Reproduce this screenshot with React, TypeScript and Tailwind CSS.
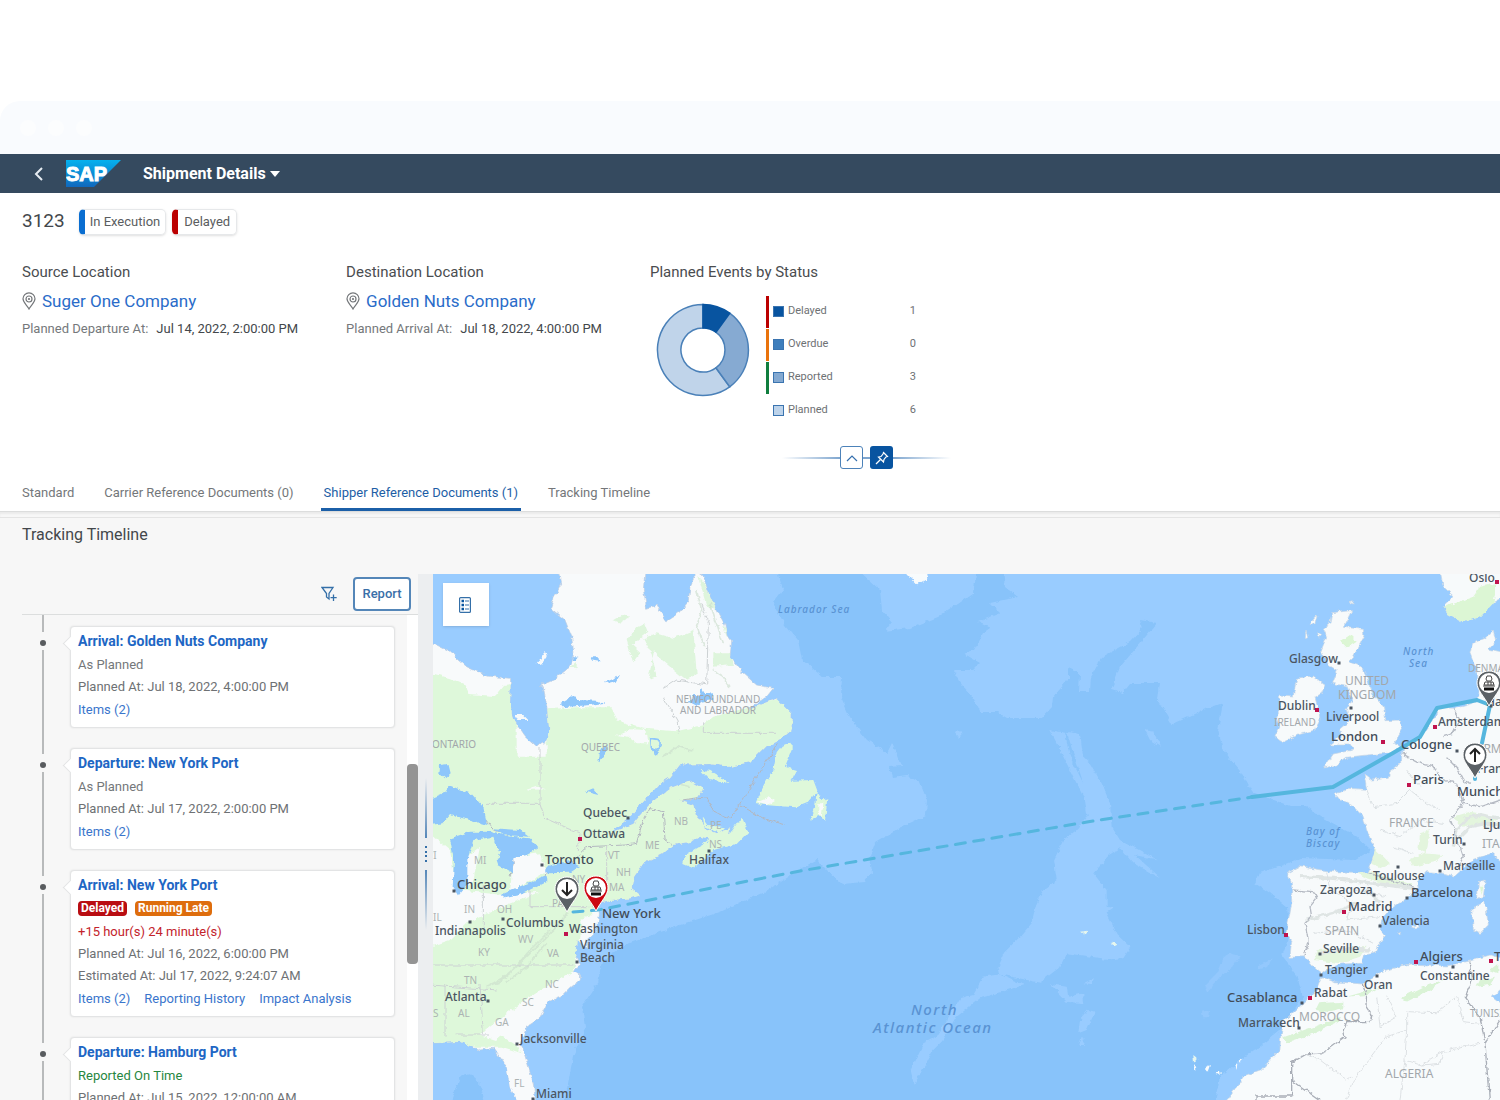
import React, { useState } from 'react';
import clsx from 'clsx';

type LabelKind = 'major' | 'city' | 'region' | 'country' | 'state' | 'sea' | 'ocean';
type MapLabel = [text: string, x: number, y: number, kind: LabelKind];

const labelStyles: Record<LabelKind, string> = {
  major: 'fill-[#424c58] text-[13px] font-medium',
  city: 'fill-[#4b5561] text-[12px] font-medium',
  region: 'fill-[#a2a7ab] text-[10px]',
  country: 'fill-[#a2a7ab] text-[12px]',
  state: 'fill-[#acb3b3] text-[10px]',
  sea: 'fill-[#5a93d3] text-[10px] italic font-medium tracking-widest',
  ocean: 'fill-[#5a93d3] text-[15px] italic font-medium tracking-widest',
};

// [text, x, baseline, kind]
const mapLabels: MapLabel[] = [
  ['Labrador Sea', 778, 613, 'sea'],
  ['North', 1403, 655, 'sea'],
  ['Sea', 1409, 667, 'sea'],
  ['Bay of', 1306, 835, 'sea'],
  ['Biscay', 1306, 847, 'sea'],
  ['North', 911, 1015, 'ocean'],
  ['Atlantic Ocean', 873, 1033, 'ocean'],
  ['NEWFOUNDLAND', 676, 703, 'region'],
  ['AND LABRADOR', 680, 714, 'region'],
  ['ONTARIO', 432, 748, 'region'],
  ['QUEBEC', 581, 751, 'region'],
  ['UNITED', 1345, 685, 'country'],
  ['KINGDOM', 1338, 699, 'country'],
  ['IRELAND', 1274, 726, 'region'],
  ['DENMARK', 1468, 672, 'region'],
  ['GERMANY', 1468, 753, 'country'],
  ['FRANCE', 1389, 827, 'country'],
  ['ITALY', 1482, 848, 'country'],
  ['SPAIN', 1325, 935, 'country'],
  ['MOROCCO', 1299, 1021, 'country'],
  ['TUNISIA', 1470, 1017, 'region'],
  ['ALGERIA', 1385, 1078, 'country'],
  ['NB', 674, 825, 'state'],
  ['PE', 710, 829, 'state'],
  ['NS', 709, 848, 'state'],
  ['ME', 645, 849, 'state'],
  ['VT', 608, 859, 'state'],
  ['NH', 616, 876, 'state'],
  ['MA', 609, 891, 'state'],
  ['NY', 572, 883, 'state'],
  ['PA', 552, 907, 'state'],
  ['MI', 474, 864, 'state'],
  ['WI', 424, 859, 'state'],
  ['IL', 433, 921, 'state'],
  ['IN', 464, 913, 'state'],
  ['OH', 497, 913, 'state'],
  ['WV', 518, 943, 'state'],
  ['KY', 478, 956, 'state'],
  ['VA', 547, 957, 'state'],
  ['TN', 464, 984, 'state'],
  ['NC', 545, 988, 'state'],
  ['SC', 522, 1006, 'state'],
  ['MS', 424, 1017, 'state'],
  ['AL', 458, 1017, 'state'],
  ['GA', 495, 1026, 'state'],
  ['FL', 514, 1087, 'state'],
  ['Quebec', 583, 817, 'city'],
  ['Ottawa', 583, 838, 'city'],
  ['Halifax', 689, 864, 'city'],
  ['Toronto', 545, 864, 'major'],
  ['Chicago', 457, 889, 'major'],
  ['New York', 602, 918, 'major'],
  ['Columbus', 506, 927, 'city'],
  ['Indianapolis', 435, 935, 'city'],
  ['Washington', 569, 933, 'city'],
  ['Virginia', 580, 949, 'city'],
  ['Beach', 580, 962, 'city'],
  ['Atlanta', 445, 1001, 'city'],
  ['Jacksonville', 520, 1043, 'city'],
  ['Miami', 536, 1098, 'city'],
  ['Oslo', 1469, 582, 'city'],
  ['Glasgow', 1289, 663, 'city'],
  ['Dublin', 1278, 710, 'city'],
  ['Liverpool', 1326, 721, 'city'],
  ['London', 1331, 741, 'major'],
  ['Amsterdam', 1438, 726, 'city'],
  ['Cologne', 1401, 749, 'major'],
  ['Hamburg', 1486, 706, 'city'],
  ['Frankfurt', 1477, 773, 'city'],
  ['Paris', 1413, 784, 'major'],
  ['Munich', 1457, 796, 'major'],
  ['Ljubljana', 1483, 829, 'city'],
  ['Turin', 1433, 844, 'city'],
  ['Marseille', 1443, 870, 'city'],
  ['Toulouse', 1373, 880, 'city'],
  ['Zaragoza', 1320, 894, 'city'],
  ['Barcelona', 1411, 897, 'major'],
  ['Madrid', 1348, 911, 'major'],
  ['Valencia', 1382, 925, 'city'],
  ['Lisbon', 1247, 934, 'city'],
  ['Seville', 1323, 953, 'city'],
  ['Tangier', 1325, 974, 'city'],
  ['Algiers', 1420, 961, 'major'],
  ['Constantine', 1420, 980, 'city'],
  ['Oran', 1364, 989, 'city'],
  ['Rabat', 1314, 997, 'city'],
  ['Casablanca', 1227, 1002, 'major'],
  ['Marrakech', 1238, 1027, 'city'],
  ['Tunis', 1494, 961, 'major'],
];

const cityDots: [number, number][] = [
  [628, 818], [709, 851], [542, 865], [454, 891], [470, 922], [503, 919],
  [577, 962], [488, 1001], [517, 1044], [533, 1099], [1339, 663], [1351, 708],
  [1457, 751], [1464, 844], [1440, 871], [1398, 867], [1374, 895], [1407, 898],
  [1380, 926], [1320, 954], [1321, 975], [1377, 976], [1453, 967], [1302, 1003],
  [1299, 1028], [1491, 706],
];

const capitalDots: [number, number][] = [
  [580, 839], [566, 934], [1497, 582], [1317, 710], [1383, 742], [1435, 727],
  [1409, 785], [1344, 912], [1286, 935], [1310, 998], [1416, 962], [1491, 961],
];

// All land masses west of the Atlantic, three units per map unit
const northAmerica =
  'M10,220 60,245 110,290 170,318 242,325 240,400 248,445 285,500 318,530 335,515 345,522 358,480 352,420 340,350 330,348 370,330 415,295 432,250 425,200 405,150 362,115 372,85 395,40 388,5 645,5 640,60 650,115 680,106 710,152 745,130 775,95 780,50 800,5 820,20 835,65 850,100 885,165 890,195 905,215 900,260 940,310 980,345 1030,355 1010,380 950,420 1040,385 1085,430 1085,480 1050,510 1000,535 960,575 900,590 840,582 750,583 720,622 690,640 640,695 600,740 540,790 610,762 655,705 720,655 780,632 820,655 800,685 750,692 790,705 797,735 825,775 860,790 900,775 895,800 840,805 810,800 780,815 730,825 700,850 640,880 612,920 605,955 630,975 600,985 540,990 500,1000 508,1030 500,1080 470,1110 474,1135 440,1110 436,1150 450,1180 432,1206 452,1215 450,1232 425,1250 395,1280 355,1295 330,1345 290,1370 273,1420 292,1480 310,1540 316,1590 322,1640 285,1640 240,1550 230,1490 190,1435 150,1440 90,1415 0,1420 0,220Z';

const northGreen =
  'M0,308 60,325 108,345 115,372 195,378 222,345 260,340 260,560 350,560 350,418 440,412 545,412 565,452 640,476 740,484 820,465 850,440 960,412 1100,370 1100,620 830,900 650,990 500,1010 460,1060 445,1130 430,1210 350,1260 270,1330 200,1390 250,1420 275,1450 215,1430 0,1430Z';

const europe =
  'M465,672 500,655 560,658 552,612 575,630 625,625 630,605 665,580 665,545 720,500 765,440 775,415 820,418 880,400 895,385 900,340 885,290 870,250 878,220 915,205 940,180 947,215 925,240 970,250 970,880 935,850 880,868 825,918 780,908 740,905 712,935 715,955 680,985 635,1015 605,1050 600,1075 616,1100 590,1130 587,1148 555,1155 545,1180 480,1182 440,1200 425,1212 400,1190 375,1160 330,1162 335,1115 318,1090 335,1000 335,940 322,910 360,890 460,905 565,908 585,840 560,780 550,740 520,710 480,690Z';

const britain =
  'M455,128 515,122 490,172 550,178 552,200 520,260 505,275 545,290 560,320 575,370 610,410 618,452 660,450 668,475 640,520 668,532 640,548 560,555 500,562 470,585 432,594 460,552 520,540 510,525 450,525 485,495 478,478 512,450 500,410 520,395 500,350 455,340 470,300 445,285 422,245 440,200 430,175 450,160Z';

const africa =
  'M425,440 460,455 550,462 600,425 690,402 800,408 870,393 930,375 970,385 970,470 938,500 970,525 970,830 130,830 190,740 240,722 300,660 302,620 312,572 370,520 410,480Z';

// Deep water of the Atlantic basin, in map units
const deepOcean =
  'M777,570 783,590 773,603 785,625 798,640 802,660 823,677 842,677 841,697 850,717 867,740 887,753 892,743 901,766 889,767 892,777 907,775 920,783 927,800 926,816 900,828 875,843 870,857 872,872 865,882 842,884 827,870 817,860 798,870 763,893 720,912 680,925 630,943 603,960 597,983 582,1007 585,1028 573,1057 563,1110 1213,1110 1220,1077 1240,1060 1262,1045 1280,1030 1303,997 1297,975 1282,955 1290,935 1287,907 1270,893 1255,883 1260,873 1283,865 1300,858 1355,860 1371,850 1355,835 1323,818 1306,806 1290,806 1252,792 1240,770 1223,750 1218,730 1223,703 1203,710 1172,724 1158,700 1160,683 1130,683 1122,693 1111,690 1120,667 1157,623 1140,620 1143,628 1130,642 1102,657 1090,677 1089,692 1079,692 1080,673 1068,668 1068,680 1053,697 1052,707 1042,718 1007,718 997,712 980,712 973,697 962,685 953,670 973,670 980,663 963,653 974,650 983,633 990,628 978,622 1000,613 990,603 1018,597 1005,587 1003,570 977,570 973,593 938,617 910,628 885,631 892,622 882,610 880,590 858,570Z';

const ridge =
  'M748,480 795,488 810,560 850,640 800,485 840,492 850,560 870,580 905,640 930,700 935,770 960,810 1070,868 1005,855 1083,925 1000,880 960,835 935,850 880,910 920,960 920,1010 942,1015 920,1030 950,1090 992,1130 970,1165 930,1168 800,1150 780,1190 720,1238 600,1213 672,1245 540,1285 470,1340 430,1410 400,1440 342,1545 332,1500 370,1420 410,1400 480,1285 520,1275 550,1220 600,1213 595,1190 615,1145 660,1100 695,1060 710,1000 730,960 770,930 762,870 790,810 830,780 860,740 850,680 820,620 790,560Z';

type PinKind = 'down' | 'up' | 'port';

function Pin({ x, y, kind, late }: { x: number; y: number; kind: PinKind; late?: boolean }) {
  return (
    <g transform={`translate(${x} ${y})`}>
      <path
        d="M0,-33C7,-33 12,-28 12,-21C12,-14 5,-8 0,2C-5,-8 -12,-14 -12,-21C-12,-28 -7,-33 0,-33Z"
        className={late ? 'fill-[#cc0712]' : 'fill-[#5b6166]'}
        stroke="#fff"
        strokeWidth="1"
      />
      <circle cy="-21" r="10" fill="#fff" />
      {kind === 'down' && <path d="M0,-28V-15M-5,-20L0,-15L5,-20" fill="none" stroke="#222" strokeWidth="2" />}
      {kind === 'up' && <path d="M0,-14V-27M-5,-22L0,-27L5,-22" fill="none" stroke="#222" strokeWidth="2" />}
      {kind === 'port' && (
        <g fill="none" stroke="#444" strokeWidth="1">
          <path d="M-2,-28H2L3,-25L2,-23H-2L-3,-25Z" />
          <path d="M-5,-19L-4,-22H4L5,-19ZM-1,-22V-19M2,-22V-19" />
          <path d="M-6,-18H6" />
          <path d="M-5,-15H5" stroke="#111" strokeWidth="3" />
        </g>
      )}
    </g>
  );
}

function ShipmentMap() {
  return (
    <svg
      viewBox="433 574 1067 526"
      preserveAspectRatio="xMinYMin slice"
      className="block h-full w-full font-['Noto_Sans','Open_Sans',sans-serif]"
      role="img"
      aria-label="Shipment route"
    >
      <defs>
        <filter id="coast" x="0" y="0" width="100%" height="100%">
          <feTurbulence type="fractalNoise" baseFrequency="0.16" numOctaves="3" seed="4" result="noise" />
          <feDisplacementMap in="SourceGraphic" in2="noise" scale="5" xChannelSelector="R" yChannelSelector="G" result="land" />
          <feGaussianBlur in="land" stdDeviation="0.4" />
        </filter>
        <clipPath id="america-clip">
          <path d={northAmerica} />
        </clipPath>
        <clipPath id="europe-clip">
          <path d={europe} />
        </clipPath>
      </defs>

      <g filter="url(#coast)">
        <rect x="400" y="540" width="1140" height="600" fill="#99ccff" />
        <path d={deepOcean} fill="#88c3fa" />

        {/* Mid-Atlantic ridge and seamounts */}
        <g transform="translate(800 570) scale(.33333)" fill="#99ccff">
          <path d={ridge} />
          <path d="M750,1242 800,1250 805,1280 850,1270 852,1300 800,1295ZM850,1240 882,1225 875,1242ZM865,1320 885,1325 860,1380 835,1390 840,1350ZM845,1400 855,1425 838,1425ZM475,478 487,490 475,503 465,490ZM1035,480 1060,485 1083,530 1050,510Z" />
          <path d="M315,8 350,46 382,28 378,8Z" fill="#f8fbfc" />
          <path d="M840,1085 862,1082 855,1096ZM932,1118 952,1120 940,1126ZM1180,1455 1192,1465 1182,1478Z" fill="#e6f6ee" />
        </g>
        <g transform="translate(1180 830) scale(.33333)" fill="#93c8fd">
          <path d="M150,370 182,378 160,410 120,440 85,485 75,465 110,430 130,380ZM235,405 275,385 265,410 238,418ZM65,545 90,540 88,562 72,562Z" />
        </g>

        {/* North America */}
        <g transform="translate(430 570) scale(.33333)">
          <path d={northAmerica} fill="#f8fafb" stroke="#bccbe0" strokeWidth="2" />
          <g clipPath="url(#america-clip)">
            <path d={northGreen} fill="#def8da" />
            <path d="M550,150 575,135 602,140 570,158ZM590,210 615,175 645,160 655,185 605,225 632,250 610,280ZM680,190 730,205 790,180 800,310 770,330 720,290 690,265 672,240 655,330 680,320 665,250 640,205ZM850,250 900,250 912,285 850,290ZM805,20 825,45 860,120 830,110ZM880,170 900,180 890,200ZM420,290 440,275 440,295Z" fill="#def5dc" />
            <path d="M0,790 60,840 80,960 220,975 330,965 215,1010 110,1060 60,1110 0,1130ZM250,860 330,850 350,905 240,965ZM150,1395 230,1330 340,1255 440,1200 450,1225 350,1290 280,1340 195,1410ZM215,1430 260,1455 320,1600 240,1600ZM450,1050 505,1025 505,1080 465,1110ZM560,495 600,478 650,480 655,520 620,520 595,500ZM290,660 320,650 348,658ZM110,860 150,830 130,930 112,950Z" fill="#f8fafb" />
            {/* Appalachians and the Labrador highlands */}
            <path d="M170,1250 210,1235 250,1200 290,1160 340,1110 390,1060 420,1010M190,1240 240,1210 300,1140 360,1080M230,1235 290,1190 350,1120M800,60 815,120 800,170 825,230M840,100 860,160 880,220M850,300 880,320 900,350M700,560 740,530 790,540M740,640 780,650" fill="none" stroke="#c9dccb" strokeWidth="5" opacity=".6" />
            <path d="M170,700 330,700M330,530V700L345,745 450,790 445,840M200,1260 0,1245M10,1185H430M160,945V1080M45,1245V1400M150,1245 160,1390M80,1395H180M530,825V970M300,945V1010H500M700,355 740,330 830,345M700,380 740,450 748,490M820,460V490H1040M815,100 835,160 830,345" fill="none" stroke="#ccd1d3" strokeWidth="3" />
          </g>
          <path d="M50,675 160,740 190,780 230,790 240,830 250,880 240,920M345,920 350,900 400,900 470,830 590,825 620,820 640,750 660,715 700,725 705,810 730,825M1045,520 900,745M930,705 1000,745 1065,765M755,690 830,680 850,725 900,745" fill="none" stroke="#b3b7c0" strokeWidth="3" />
          <g fill="#8ec6fb">
            <path d="M0,690 35,675 55,645 125,672 160,712 172,765 120,750 60,735 40,760 0,765Z" />
            <path d="M60,805 120,785 180,785 240,800 300,805 325,835 290,855 250,865 248,910 205,885 200,870 212,850 190,800 130,810 112,870 112,945 85,978 68,950 72,870Z" />
            <path d="M212,975 280,945 350,918 352,935 270,975 225,985ZM345,900 360,885 420,872 450,888 420,908 350,910ZM190,775 270,780 300,800 220,795Z" />
            <path d="M30,585 55,582 62,610 45,625 28,610ZM390,400 430,378 440,390 500,392 525,398 480,405 400,412ZM482,262 505,262 508,275 490,272ZM525,335 570,318 560,335 535,342ZM505,580 512,535 535,525 520,560ZM465,665 490,655 505,675ZM780,400 790,375 810,375 815,355 825,372 850,370 850,390 815,395 800,410ZM430,258 442,260 438,270 425,270Z" />
            <path d="M662,505 690,510 690,530 678,540 676,556 674,540 664,530Z" fill="none" stroke="#8ec6fb" strokeWidth="5" />
            <path d="M90,1520 120,1513 150,1540 165,1600 60,1600Z" fill="#88c3fa" />
          </g>
          <path d="M1055,530 1085,518 1085,540 1065,590 1098,600 1085,632 1150,630 1162,662 1130,700 1100,712 1040,708 975,702 1000,650 1030,600 1040,550ZM1160,665 1175,690 1192,685 1185,752 1165,735 1140,752 1155,715ZM812,600 840,602 895,635 880,640 835,625ZM815,742 832,765 885,772 868,788 820,768ZM935,740 955,785 920,822 850,840 830,860 790,895 760,882 765,855 830,815 850,800 900,790Z" fill="#def8da" />
          <path d="M320,280 345,245 350,260 333,285ZM255,435 280,435 295,450 265,450ZM1165,700 1180,700 1175,740 1165,725ZM980,698 1020,680 1035,690 1010,705Z" fill="#f8fafb" />
        </g>

        {/* Europe */}
        <g transform="translate(1180 570) scale(.33333)">
          <g fill="#f7fafb" stroke="#c9d6e4" strokeWidth="2">
            <path d={europe} />
            <path d={britain} />
            <path d="M350,325 400,318 435,345 425,370 405,382 415,420 420,450 405,480 350,495 310,518 285,500 300,470 290,440 300,420 298,375 340,378ZM390,160 412,135 405,162ZM378,180 384,205 376,205ZM505,98 520,95 518,105ZM412,185 425,195 418,205Z" />
            <path d="M780,0 790,50 822,80 790,110 805,132 850,155 900,140 935,100 970,80 970,0Z" />
            <path d="M895,935 916,930 910,980 893,985ZM875,1015 915,995 925,1065 900,1090 880,1080ZM653,1088 662,1084 658,1093ZM695,1070 712,1062 718,1072 705,1074ZM735,1050 748,1052 742,1058Z" />
          </g>
          <path d="M790,110 825,100 880,80 900,50 950,40 940,100 900,142 850,155 805,132ZM480,215 510,195 530,215 500,235ZM900,950 910,950 905,975Z" fill="#dcf6d4" />
          <g clipPath="url(#europe-clip)">
            <path d="M580,830 630,880 600,895 575,885ZM690,870 730,850 790,855 770,875 700,890ZM720,790 750,780 740,850 715,840ZM820,740 870,725 960,740 930,765 840,770ZM410,1140 560,1130 540,1160 480,1180 400,1170ZM500,890 560,900 700,945 640,950 560,925Z" fill="#e3f5dd" />
            {/* Alps, Pyrenees and the Meseta */}
            <path d="M820,830 830,780 860,745 900,735 960,745M840,800 870,770 920,760 970,765M360,920 460,925 540,935 620,945 700,955M380,1050 460,1030 530,1000M560,960 600,1000M420,1150 500,1135 570,1140" fill="none" stroke="#dfe5e4" strokeWidth="10" />
            <path d="M665,550 720,580 760,590 790,630 830,640 850,700 810,750 830,800 850,860 830,900M565,908 640,935 715,955M335,960 400,965 410,985 390,1010 395,1040 375,1060 385,1110 372,1160M850,700 900,710 960,690M800,560 830,590 850,630 870,640M820,418 840,450 820,490 790,500" fill="none" stroke="#b5bac3" strokeWidth="4" />
            <path d="M560,658 580,710 650,700 690,660 740,700 780,720M600,780 660,800 720,750 790,760M680,600 720,650M440,905 450,960 520,1000 500,1050 600,1040M520,960 620,980M400,1090 500,1080 580,1120M640,830 700,850" fill="none" stroke="#dbe0e3" strokeWidth="3" />
          </g>
        </g>

        {/* North Africa */}
        <g transform="translate(1180 830) scale(.33333)">
          <path d={africa} fill="#f8fbfc" stroke="#c9d6e4" strokeWidth="2" />
          <path d="M310,622 400,590 480,560 470,580 380,620 320,640ZM415,520 490,515 490,535 440,545 405,540ZM500,500 570,480 600,470 560,495ZM660,505 730,470 790,450 750,480 680,515ZM900,450 945,440 930,465 890,470ZM930,420 955,400 955,430Z" fill="#daf3d6" />
          <path d="M550,462 560,490 558,530 578,560 570,575 500,575 490,600 495,620 430,668 380,672 335,698V798H228V820M335,750 420,810M870,395 878,450 855,500 900,560 915,640 928,810M915,640 960,570" fill="none" stroke="#a9aeb7" strokeWidth="4" />
          <path d="M380,675 420,690 500,750 515,740M515,760 620,620 680,600V545L770,548 830,500 850,575 900,580M680,600 675,690 725,705 790,665 900,640M725,705 780,700 790,665M515,760 500,810M675,690 660,810M620,500 650,560 600,590 590,500" fill="none" stroke="#dde1e4" strokeWidth="3" />
          <path d="M40,700 52,715 45,722ZM75,715 90,708 84,725ZM110,728 120,720 122,736ZM165,705 172,700 170,720ZM178,690 186,688 182,698Z" fill="#f8fbfc" />
        </g>
      </g>

      {/* Route */}
      <g fill="none" stroke="#55b6de" strokeLinecap="round" strokeLinejoin="round">
        <path d="M573,912 598,910 800,871 1087,822 1252,797" strokeWidth="3" strokeDasharray="10 8.5" />
        <path d="M1252,797 1333,787 1393,753 1420,737 1437,708 1477,700 1490,705 1482,743M1475,778V779" strokeWidth="4" />
      </g>

      {cityDots.map(([x, y]) => (
        <rect key={`${x}-${y}`} x={x - 1.5} y={y - 1.5} width="3" height="3" fill="#4b5561" />
      ))}
      {capitalDots.map(([x, y]) => (
        <rect key={`${x}-${y}`} x={x - 2} y={y - 2} width="4" height="4" fill="#c0134e" />
      ))}
      {mapLabels.map(([text, x, y, kind]) => (
        <text key={`${text}-${y}`} x={x} y={y} className={labelStyles[kind]}>
          {text}
        </text>
      ))}

      <Pin x={567} y={910} kind="down" />
      <Pin x={596} y={909} kind="port" late />
      <Pin x={1489} y={704} kind="port" />
      <Pin x={1475} y={776} kind="up" />
    </svg>
  );
}

const legend = [
  { name: 'Delayed', value: 1, swatch: 'bg-[#0854a0]', bar: 'bg-[#bb0000]' },
  { name: 'Overdue', value: 0, swatch: 'bg-[#3e7ebc]', bar: 'bg-[#e9730c]' },
  { name: 'Reported', value: 3, swatch: 'bg-[#84a9d1]', bar: 'bg-[#107e3e]' },
  { name: 'Planned', value: 6, swatch: 'bg-[#bdd3ea]', bar: 'bg-transparent' },
];

function Donut() {
  return (
    <svg viewBox="-47 -47 94 94" className="mt-2 ml-1.5 size-[94px]" aria-hidden="true">
      <g stroke="#4a80b8" strokeWidth="1.5">
        <path d="M0,-45.5A45.5,45.5 0 1 0 26.7,36.8L12.9,17.8A22,22 0 1 1 0,-22Z" fill="#c0d4ea" />
        <path d="M26.7,-36.8A45.5,45.5 0 0 1 26.7,36.8L12.9,17.8A22,22 0 0 0 12.9,-17.8Z" fill="#86aad2" />
        <path d="M0,-45.5A45.5,45.5 0 0 1 26.7,-36.8L12.9,-17.8A22,22 0 0 0 0,-22Z" fill="#0854a0" stroke="#0854a0" />
      </g>
    </svg>
  );
}

function PinOutline() {
  return (
    <svg viewBox="0 0 14 18" className="h-[18px] w-3.5" fill="none" stroke="#74777a" strokeWidth="1.2" aria-hidden="true">
      <path d="M7,17C5,13 1,10.5 1,6.8A6,6 0 0 1 13,6.8C13,10.5 9,13 7,17Z" />
      <circle cx="7" cy="7" r="3" />
      <circle cx="7" cy="7" r=".5" />
    </svg>
  );
}

function LocationBlock({ title, company, label, date }: { title: string; company: string; label: string; date: string }) {
  return (
    <div>
      <h2 className="text-[15px] leading-5 text-[#4a4d50]">{title}</h2>
      <div className="mt-[7px] flex items-center gap-1.5">
        <PinOutline />
        <a href="#" className="text-[17px] leading-6 text-[#2a6cc9]">{company}</a>
      </div>
      <p className="mt-1.5 flex gap-2 text-[13px] leading-5 text-[#43474b]">
        <span className="text-[#75787b]">{label}</span>
        {date}
      </p>
    </div>
  );
}

type TimelineEvent = {
  title: string;
  status?: string;
  onTime?: boolean;
  badges?: { text: string; color: string }[];
  delay?: string;
  lines: string[];
  links: string[];
};

const events: TimelineEvent[] = [
  { title: 'Arrival: Golden Nuts Company', status: 'As Planned', lines: ['Planned At: Jul 18, 2022, 4:00:00 PM'], links: ['Items (2)'] },
  { title: 'Departure: New York Port', status: 'As Planned', lines: ['Planned At: Jul 17, 2022, 2:00:00 PM'], links: ['Items (2)'] },
  {
    title: 'Arrival: New York Port',
    badges: [
      { text: 'Delayed', color: 'bg-[#b90d12]' },
      { text: 'Running Late', color: 'bg-[#de6d0d]' },
    ],
    delay: '+15 hour(s) 24 minute(s)',
    lines: ['Planned At: Jul 16, 2022, 6:00:00 PM', 'Estimated At: Jul 17, 2022, 9:24:07 AM'],
    links: ['Items (2)', 'Reporting History', 'Impact Analysis'],
  },
  { title: 'Departure: Hamburg Port', status: 'Reported On Time', onTime: true, lines: ['Planned At: Jul 15, 2022, 12:00:00 AM'], links: ['Items (2)'] },
];

function EventCard({ event }: { event: TimelineEvent }) {
  return (
    <article className="relative flex-1 rounded-sm border border-[#e3e4e5] bg-white px-[7px] pt-[3px] pb-1.5 text-[13px] shadow-[0_0_2px_#0000001a]">
      <span className="absolute top-[11px] -left-[6px] size-[11px] rotate-45 border-b border-l border-[#e3e4e5] bg-white" />
      <h3 className="text-[14px] leading-[23px] font-bold text-[#2066c4]">{event.title}</h3>
      {event.status && (
        <p className={clsx('leading-[23px]', event.onTime ? 'text-[#27873f]' : 'text-[#74777a]')}>{event.status}</p>
      )}
      {event.badges && (
        <p className="flex h-[23px] items-center gap-2">
          {event.badges.map((b) => (
            <span key={b.text} className={clsx('rounded px-[3px] text-[12px] leading-[15px] font-bold text-white', b.color)}>
              {b.text}
            </span>
          ))}
        </p>
      )}
      {event.delay && <p className="leading-[23px] text-[#c3232b]">{event.delay}</p>}
      {event.lines.map((line) => (
        <p key={line} className="leading-[22px] text-[#6e7174]">{line}</p>
      ))}
      <p className="flex gap-3.5 leading-[23px]">
        {event.links.map((link) => (
          <a key={link} href="#" className="text-[#3a75cc]">{link}</a>
        ))}
      </p>
    </article>
  );
}

const tabs = ['Standard', 'Carrier Reference Documents (0)', 'Shipper Reference Documents (1)', 'Tracking Timeline'];

export default function App() {
  const [activeTab, setActiveTab] = useState(tabs[2]);

  return (
    <div className="flex h-screen flex-col overflow-hidden bg-white pt-[101px] font-['Roboto','Noto_Sans',sans-serif]">
      {/* Window frame */}
      <div className="flex h-[53px] shrink-0 items-center gap-3 rounded-tl-[20px] bg-[#f9fbfe] pl-5">
        <span className="size-4 rounded-full bg-[#fcfdfe]" />
        <span className="size-4 rounded-full bg-[#fcfdfe]" />
        <span className="size-4 rounded-full bg-[#fcfdfe]" />
      </div>

      {/* Shell bar */}
      <header className="flex h-[39px] shrink-0 items-center bg-[#354a5f] pl-[34px] text-white">
        <button aria-label="Back">
          <svg viewBox="0 0 10 14" className="h-3.5 w-2.5" fill="none" stroke="#e6ecf2" strokeWidth="2">
            <path d="M8,1L2,7L8,13" />
          </svg>
        </button>
        <svg viewBox="0 0 56 28" className="ml-[22px] h-7 w-14" role="img" aria-label="SAP">
          <defs>
            <linearGradient id="sap" x1="0" y1="0" x2="0" y2="1">
              <stop offset="0" stopColor="#06b1ee" />
              <stop offset="1" stopColor="#1068bd" />
            </linearGradient>
          </defs>
          <path d="M0,0H55L28,27H0Z" fill="url(#sap)" />
          <text x="0" y="21" fill="#fff" stroke="#fff" strokeWidth="1" className="font-['Liberation_Sans'] text-[20px] font-bold">SAP</text>
        </svg>
        <button className="ml-[21px] flex items-center gap-1 text-[16px] font-bold">
          Shipment Details
          <svg viewBox="0 0 10 6" className="h-1.5 w-2.5" fill="#fff" aria-hidden="true">
            <path d="M0,0H10L5,6Z" />
          </svg>
        </button>
      </header>

      {/* Object header */}
      <section className="shrink-0 pt-[15px]">
        <div className="flex h-[27px] items-center pl-[22px]">
          <h1 className="text-[19px] text-[#43474b]">3123</h1>
          <span className="ml-3.5 rounded-[5px] border border-l-[6px] border-[#e6e8ea] border-l-[#0a6ed1] px-[5px] text-[13px] leading-6 text-[#5a5d60] shadow-sm">In Execution</span>
          <span className="ml-1.5 rounded-[5px] border border-l-[6px] border-[#e6e8ea] border-l-[#bb0000] px-1.5 text-[13px] leading-6 text-[#5a5d60] shadow-sm">Delayed</span>
        </div>

        <div className="mt-[27px] flex gap-12 pl-[22px]">
          <LocationBlock title="Source Location" company="Suger One Company" label="Planned Departure At:" date="Jul 14, 2022, 2:00:00 PM" />
          <LocationBlock title="Destination Location" company="Golden Nuts Company" label="Planned Arrival At:" date="Jul 18, 2022, 4:00:00 PM" />
          <div>
            <h2 className="text-[15px] leading-5 text-[#4a4d50]">Planned Events by Status</h2>
            <div className="mt-[13px] flex items-start gap-4">
              <Donut />
              <ul className="w-[150px] text-[11px] text-[#6e7174]">
                {legend.map((item) => (
                  <li key={item.name} className="flex h-[33px] items-center">
                    <span className={clsx('mr-1 h-8 w-[3px]', item.bar)} />
                    <span className={clsx('mr-1 size-[11px] border border-[#3a74b0]', item.swatch)} />
                    <span>{item.name}</span>
                    <span className="ml-auto">{item.value}</span>
                  </li>
                ))}
              </ul>
            </div>
          </div>
        </div>

        <div className="mt-[19px] flex items-center pl-[782px]">
          <span className="h-0.5 w-[58px] bg-linear-to-r from-transparent to-[#7fa6cf]" />
          <button aria-label="Collapse header" className="flex size-[23px] items-center justify-center rounded-[3px] border border-[#4c82b9] bg-white">
            <svg viewBox="0 0 12 8" className="h-2 w-3" fill="none" stroke="#346fae" strokeWidth="1.2">
              <path d="M1,7L6,2L11,7" />
            </svg>
          </button>
          <span className="h-0.5 w-[7px] bg-[#7fa6cf]" />
          <button aria-label="Pin header" className="flex size-[23px] items-center justify-center rounded-[3px] bg-[#0854a0]">
            <svg viewBox="0 0 14 14" className="size-3.5" fill="none" stroke="#fff" strokeWidth="1.2">
              <path d="M8.5,1.5L12.5,5.5L11,6L9,8.5L8.5,11L3.5,6L6,5.5L8,3Z" />
              <path d="M5.5,8.5L1,13" />
            </svg>
          </button>
          <span className="h-0.5 w-[58px] bg-linear-to-r from-[#7fa6cf] to-transparent" />
        </div>

        <nav className="flex h-[42px] gap-6 pl-[19px] text-[13px]">
          {tabs.map((tab) => (
            <button
              key={tab}
              onClick={() => setActiveTab(tab)}
              className={clsx(
                'border-b-[3px] px-[3px] pt-2',
                tab === activeTab ? 'border-[#1b5fa8] text-[#1d5ea6]' : 'border-transparent text-[#74777a]',
              )}
            >
              {tab}
            </button>
          ))}
        </nav>
      </section>

      {/* Tracking timeline */}
      <section className="flex min-h-0 flex-1 flex-col border-t border-[#dcdddd] bg-[#f7f7f7]">
        <div className="h-1.5 shrink-0 border-b border-[#e4e4e4] shadow-[inset_0_2px_2px_#0000000d]" />
        <h2 className="mt-[5px] mb-[27px] pl-[22px] text-[16px] leading-6 text-[#43474b]">Tracking Timeline</h2>

        <div className="flex min-h-0 flex-1">
          <div className="flex w-[418px] shrink-0 flex-col pl-[22px]">
            <div className="flex h-[41px] shrink-0 items-center justify-end gap-4 border-b border-[#dcdede] pr-[7px]">
              <button aria-label="Add filter">
                <svg viewBox="0 0 16 16" className="size-4" fill="none" stroke="#346fa8" strokeWidth="1.3">
                  <path d="M1,1.5H12L8,7.5V13L5.5,11V7.5Z" />
                  <path d="M12.5,8.5V15M9.5,11.7H15.7" />
                </svg>
              </button>
              <button className="h-[34px] w-[58px] rounded border-2 border-[#5486b8] bg-white text-[13px] font-medium text-[#3a6fa8]">Report</button>
            </div>
            <div className="flex min-h-0 flex-1">
              <ol className="min-w-0 flex-1 overflow-hidden pr-3">
                {events.map((event) => (
                  <li key={event.title} className="flex">
                    <div className="mr-6 flex w-6 flex-col items-end">
                      <span className="mr-0.5 h-[17px] w-0.5 bg-[#b8babb]" />
                      <span className="mt-2 mb-1 size-1.5 rounded-full bg-[#595c5f]" />
                      <span className="mr-0.5 w-0.5 flex-1 bg-[#b8babb]" />
                    </div>
                    <div className="flex flex-1 pt-[11px] pb-[9px]">
                      <EventCard event={event} />
                    </div>
                  </li>
                ))}
              </ol>
              <div className="w-[11px] bg-white">
                <div className="mt-[149px] h-[200px] rounded bg-[#949494]" />
              </div>
            </div>
          </div>

          {/* Splitter */}
          <div className="flex w-[15px] shrink-0 flex-col items-center bg-[#eceef0] pt-[204px]">
            <span className="h-[60px] w-0.5 bg-linear-to-b from-transparent to-[#5486b8]" />
            <span className="my-2 flex h-4 flex-col justify-between">
              <i className="size-0.5 bg-[#346fa8]" />
              <i className="size-0.5 bg-[#346fa8]" />
              <i className="size-0.5 bg-[#346fa8]" />
              <i className="size-0.5 bg-[#346fa8]" />
            </span>
            <span className="h-[60px] w-0.5 bg-linear-to-b from-[#5486b8] to-transparent" />
          </div>

          <div className="relative min-w-0 flex-1 overflow-hidden">
            <ShipmentMap />
            <button aria-label="Show legend" className="absolute top-[9px] left-2.5 flex h-[43px] w-[46px] items-center justify-center bg-white pr-0.5 shadow">
              <svg viewBox="0 0 12 16" className="h-4 w-3" fill="none" stroke="#346fa8" strokeWidth="1.2">
                <rect x=".6" y=".6" width="10.8" height="14.8" rx="1" />
                <path d="M6,4H10M6,8H10M6,12H10" />
                <path d="M2.5,4H5M2.5,8H5M2.5,12H5" strokeWidth="2.5" stroke="#0854a0" />
              </svg>
            </button>
          </div>
        </div>
      </section>
    </div>
  );
}
